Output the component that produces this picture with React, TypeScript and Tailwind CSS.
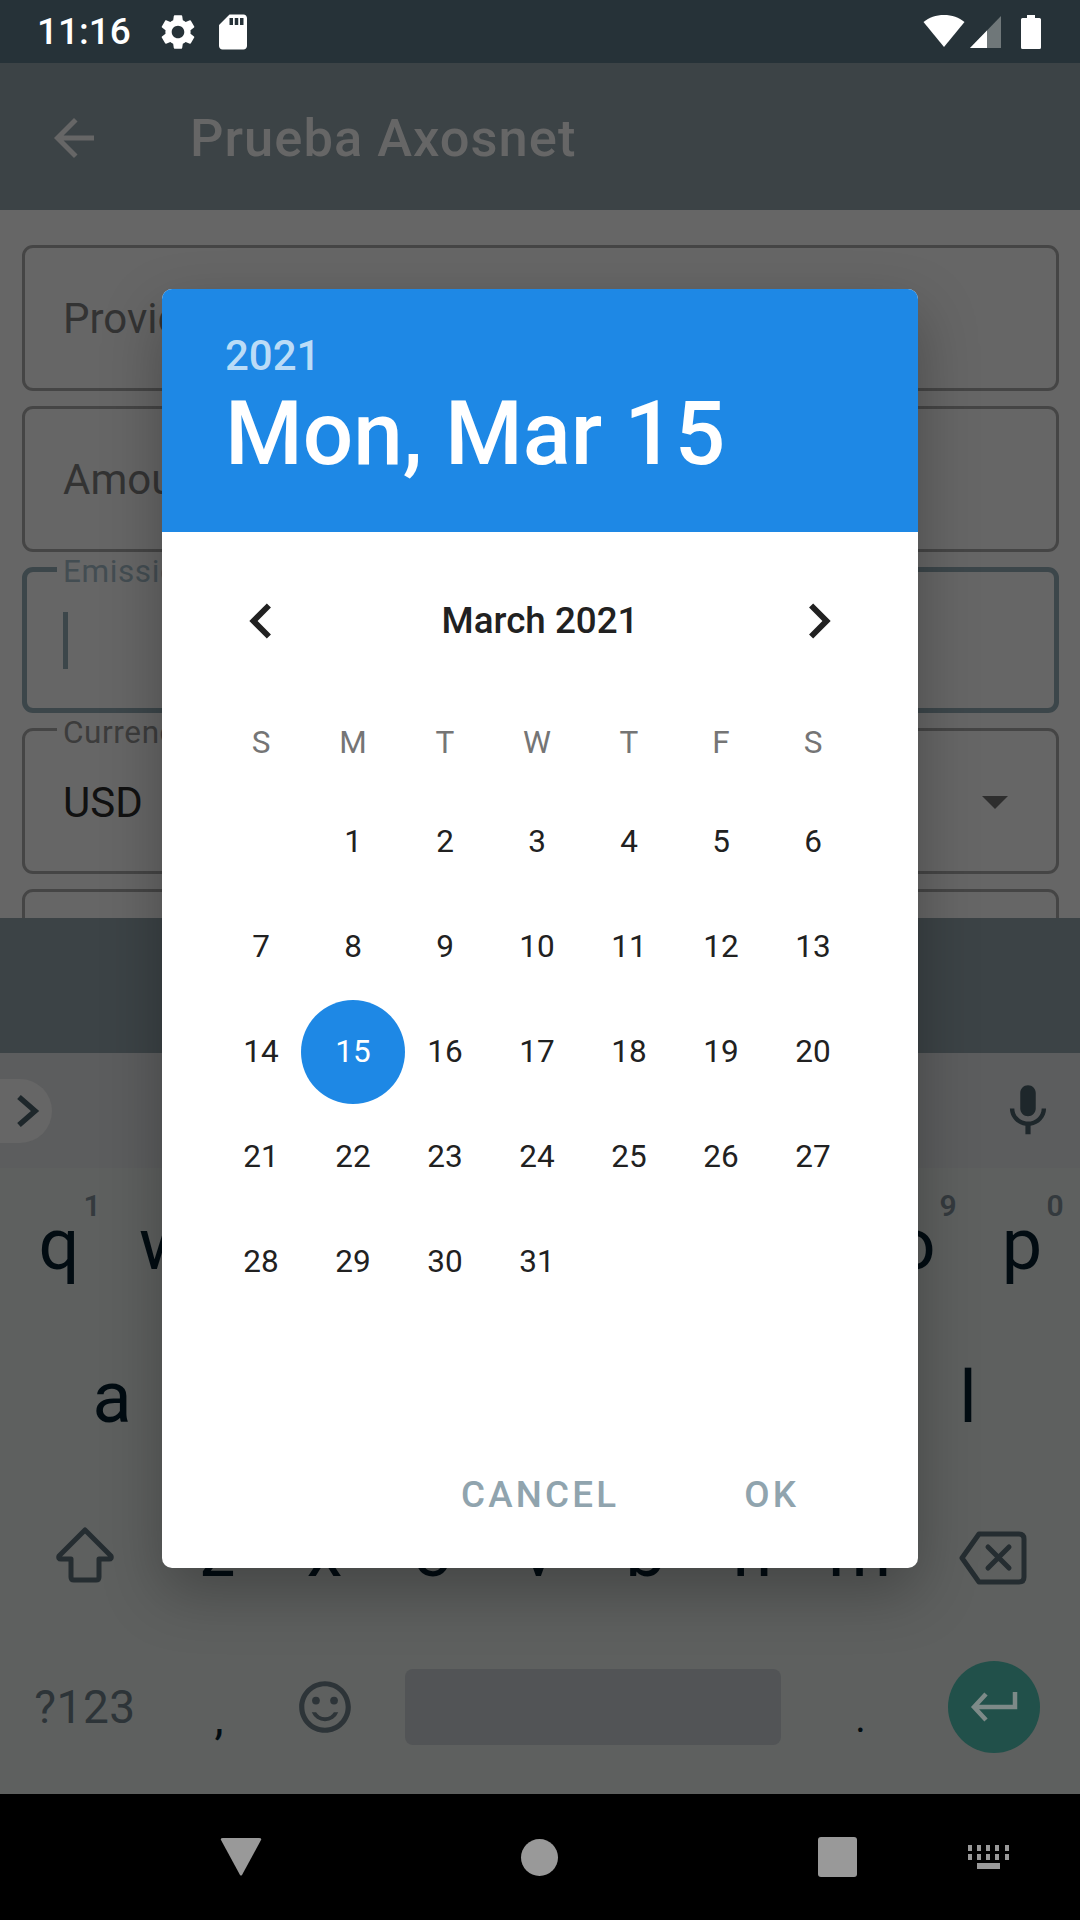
import React from "react";
import { MdSettings, MdSdCard, MdArrowBack, MdChevronLeft, MdChevronRight, MdMic, MdOutlineSentimentSatisfied } from "react-icons/md";

const weeks: (number | null)[][] = [
  [null, 1, 2, 3, 4, 5, 6],
  [7, 8, 9, 10, 11, 12, 13],
  [14, 15, 16, 17, 18, 19, 20],
  [21, 22, 23, 24, 25, 26, 27],
  [28, 29, 30, 31, null, null, null],
];

const hints: Record<string, string> = { q: "1", o: "9", p: "0" };

function Key({ c, hint }: { c: string; hint?: string }) {
  return (
    <div className="relative flex w-[107px] items-center justify-center text-[72px] leading-none text-[#020c12]">
      {c}
      {hint && (
        <span className="absolute left-[78px] top-[23px] text-[30px] font-semibold leading-none text-[#343a3e]">{hint}</span>
      )}
    </div>
  );
}

export default function App() {
  return (
    <div className="relative flex h-[1920px] w-[1080px] flex-col overflow-hidden bg-[#666666] font-['Roboto',sans-serif]">
      {/* status bar */}
      <div className="flex h-[63px] items-center bg-[#263238] pl-[37px] pr-[39px] text-white">
        <span className="w-[92px] text-[37px] font-medium leading-none">11:16</span>
        <MdSettings className="ml-[28px] h-[42px] w-[42px]" />
        <MdSdCard className="ml-[13px] h-[42px] w-[42px]" />
        <div className="ml-auto flex items-center">
          <svg width="42" height="33" viewBox="0 0 42 33" className="mr-[5px]">
            <path d="M21 32 L0.5 7 C6 2.5 13 0 21 0 C29 0 36 2.5 41.5 7 Z" fill="#ffffff" />
          </svg>
          <svg width="31" height="32" viewBox="0 0 31 32" className="mr-[20px]">
            <path d="M0 32 L31 0 V32 Z" fill="#6f7779" />
            <path d="M0 32 L17 14.5 V32 Z" fill="#ffffff" />
          </svg>
          <svg width="20" height="34" viewBox="0 0 20 34">
            <path d="M6 0 H14 V3 H18.5 Q20 3 20 4.5 V32.5 Q20 34 18.5 34 H1.5 Q0 34 0 32.5 V4.5 Q0 3 1.5 3 H6 Z" fill="#ffffff" />
          </svg>
        </div>
      </div>

      {/* app bar */}
      <div className="flex h-[147px] items-center bg-[#3c4346] pl-[44px] pt-[3px] text-[#666666]">
        <MdArrowBack className="h-[60px] w-[60px]" />
        <span className="ml-[86px] text-[52.5px] font-medium leading-none tracking-[1px]">Prueba Axosnet</span>
      </div>

      {/* form */}
      <div className="flex h-[708px] flex-col gap-[15px] overflow-hidden bg-[#666666] pl-[22px] pr-[21px] pt-[35px] text-[42px]">
        <div className="flex h-[146px] shrink-0 items-center rounded-[11px] border-[3px] border-[#454545] pl-[38px] text-[#333333]">Provider</div>
        <div className="flex h-[146px] shrink-0 items-center rounded-[11px] border-[3px] border-[#454545] pl-[38px] text-[#333333]">Amount</div>
        <div className="relative flex h-[146px] shrink-0 items-center rounded-[11px] border-[5px] border-[#3c464a] pl-[36px]">
          <span className="absolute -top-[17px] left-[30px] bg-[#666666] px-[6px] text-[31.5px] leading-[34px] tracking-[0.6px] text-[#434d52]">Emission date</span>
          <span className="h-[57px] w-[5px] bg-[#3c464a]" />
        </div>
        <div className="relative flex h-[146px] shrink-0 items-center justify-between rounded-[11px] border-[3px] border-[#454545] pl-[30px] pr-[48px] pt-[3px] text-[#111111]">
          <span className="absolute -top-[15px] left-[32px] bg-[#666666] px-[6px] text-[31.5px] leading-[34px] tracking-[0.6px] text-[#3c3c3c]">Currency</span>
          <span className="pl-[8px]">USD</span>
          <svg width="26" height="13" viewBox="0 0 26 13"><path d="M0 0 H26 L13 13 Z" fill="#2e2e2e" /></svg>
        </div>
        <div className="h-[146px] shrink-0 rounded-[11px] border-[3px] border-[#454545]" />
      </div>

      {/* button band */}
      <div className="h-[135px] bg-[#3c4346]" />

      {/* suggestion strip */}
      <div className="flex h-[115px] items-center justify-between bg-[#5c5d5e] pr-[21px] text-[#1e272b]">
        <div className="flex h-[64px] w-[52px] items-center rounded-r-[32px] bg-[#666666]">
          <svg width="24" height="34" viewBox="0 0 24 34" className="ml-[16px]"><path d="M3 3 L19 17 L3 31" fill="none" stroke="#1e272b" strokeWidth="5.5" /></svg>
        </div>
        <MdMic className="h-[62px] w-[62px]" />
      </div>

      {/* keyboard */}
      <div className="flex h-[626px] flex-col bg-[#5e605f]">
        <div className="flex h-[154px] justify-center pl-[1px]">
          {["q", "w", "e", "r", "t", "y", "u", "i", "o", "p"].map((c) => (
            <Key key={c} c={c} hint={hints[c]} />
          ))}
        </div>
        <div className="flex h-[152px] justify-center">
          {["a", "s", "d", "f", "g", "h", "j", "k", "l"].map((c) => (
            <Key key={c} c={c} />
          ))}
        </div>
        <div className="flex h-[156px]">
          <div className="flex w-[164px] items-center justify-center pl-[6px] pt-[6px]">
            <svg width="60" height="56" viewBox="0 0 60 56">
              <path d="M30 3 L56 29 Q57 32 54 32 H44 V50 Q44 53 41 53 H19 Q16 53 16 50 V32 H6 Q3 32 4 29 Z" fill="none" stroke="#252d31" strokeWidth="5" strokeLinejoin="round" />
            </svg>
          </div>
          {["z", "x", "c", "v", "b", "n", "m"].map((c) => (
            <Key key={c} c={c} />
          ))}
          <div className="flex w-[167px] items-center justify-center pr-[7px] pt-[12px]">
            <svg width="68" height="54" viewBox="0 0 68 54">
              <path d="M3 27 L20 3 H60 Q65 3 65 8 V46 Q65 51 60 51 H20 Z" fill="none" stroke="#252d31" strokeWidth="5" strokeLinejoin="round" />
              <path d="M29 16 L50 37 M50 16 L29 37" stroke="#252d31" strokeWidth="5" strokeLinecap="round" />
            </svg>
          </div>
        </div>
        <div className="flex h-[164px] items-center pb-[10px] text-[#2d3438]">
          <span className="w-[170px] text-center text-[46px] leading-none tracking-[0.5px]">?123</span>
          <span className="w-[98px] pt-[22px] text-center text-[46px] leading-none text-[#020c12]">,</span>
          <span className="flex w-[116px] justify-center pr-[2px]">
            <MdOutlineSentimentSatisfied className="h-[62px] w-[62px]" />
          </span>
          <div className="ml-[21px] h-[76px] w-[376px] rounded-[8px] bg-[#525456]" />
          <span className="w-[159px] pt-[24px] text-center text-[40px] leading-none text-[#020c12]">.</span>
          <div className="ml-[8px] flex h-[92px] w-[92px] items-center justify-center rounded-full bg-[#21504a]">
            <svg width="50" height="34" viewBox="0 0 50 34">
              <path d="M46 2 V17 H6 M17 4 L5 17 L17 30" fill="none" stroke="#7d8a88" strokeWidth="4.5" />
            </svg>
          </div>
        </div>
      </div>

      {/* nav bar */}
      <div className="relative flex h-[126px] items-center bg-black">
        <svg width="42" height="38" viewBox="0 0 42 38" className="ml-[220px]">
          <path d="M1 2 Q0 0 3 0 H39 Q42 0 41 2 L22 37 Q21 38 20 37 Z" fill="#999999" />
        </svg>
        <div className="ml-[259px] h-[37px] w-[37px] rounded-full bg-[#999999]" />
        <div className="ml-[260px] h-[40px] w-[39px] rounded-[3px] bg-[#999999]" />
        <svg width="41" height="24" viewBox="0 0 41 24" className="ml-[111px]" fill="#999999">
          <path d="M0 0h4v6H0zM9 0h4v6H9zM18 0h4v6h-4zM27 0h4v6h-4zM37 0h4v6h-4zM0 9h4v6H0zM9 9h4v6H9zM18 9h4v6h-4zM27 9h4v6h-4zM37 9h4v6h-4zM9 18h23v6H9z" />
        </svg>
      </div>

      {/* date picker dialog */}
      <div className="absolute left-[162px] top-[289px] flex h-[1279px] w-[756px] flex-col overflow-hidden rounded-[10px] bg-white shadow-[0_24px_60px_rgba(0,0,0,0.28)]">
        <div className="flex h-[243px] flex-col bg-[#1e88e5] pl-[63px] pt-[42px]">
          <span className="text-[42px] font-medium leading-[50px] text-[#bbdcf7]">2021</span>
          <span className="mt-[1px] text-[89px] font-medium leading-[104px] text-white">Mon, Mar 15</span>
        </div>
        <div className="mt-[54px] flex h-[70px] items-center justify-between px-[64px] text-[#212121]">
          <MdChevronLeft className="h-[70px] w-[70px]" />
          <span className="text-[36.75px] font-medium leading-none">March 2021</span>
          <MdChevronRight className="h-[70px] w-[70px]" />
        </div>
        <div className="ml-[53px] mt-[62px] grid h-[50px] w-[644px] grid-cols-7 items-center text-center text-[31.5px] leading-none text-[#757575]">
          {["S", "M", "T", "W", "T", "F", "S"].map((d, i) => (
            <span key={i}>{d}</span>
          ))}
        </div>
        <div className="ml-[53px] mt-[21px] grid w-[644px] grid-cols-7 text-[31.5px] leading-none text-[#212121]">
          {weeks.flat().map((d, i) => (
            <div key={i} className="flex h-[105px] items-center justify-center">
              {d === 15 ? (
                <span className="flex h-[104px] w-[104px] shrink-0 items-center justify-center rounded-full bg-[#1e88e5] text-white">15</span>
              ) : (
                d
              )}
            </div>
          ))}
        </div>
        <div className="mb-[31px] mt-auto flex h-[84px] items-center text-[36.75px] font-medium leading-none tracking-[3.2px] text-[#90a4ae]">
          <span className="ml-[299px]">CANCEL</span>
          <span className="ml-[125px]">OK</span>
        </div>
      </div>
    </div>
  );
}
